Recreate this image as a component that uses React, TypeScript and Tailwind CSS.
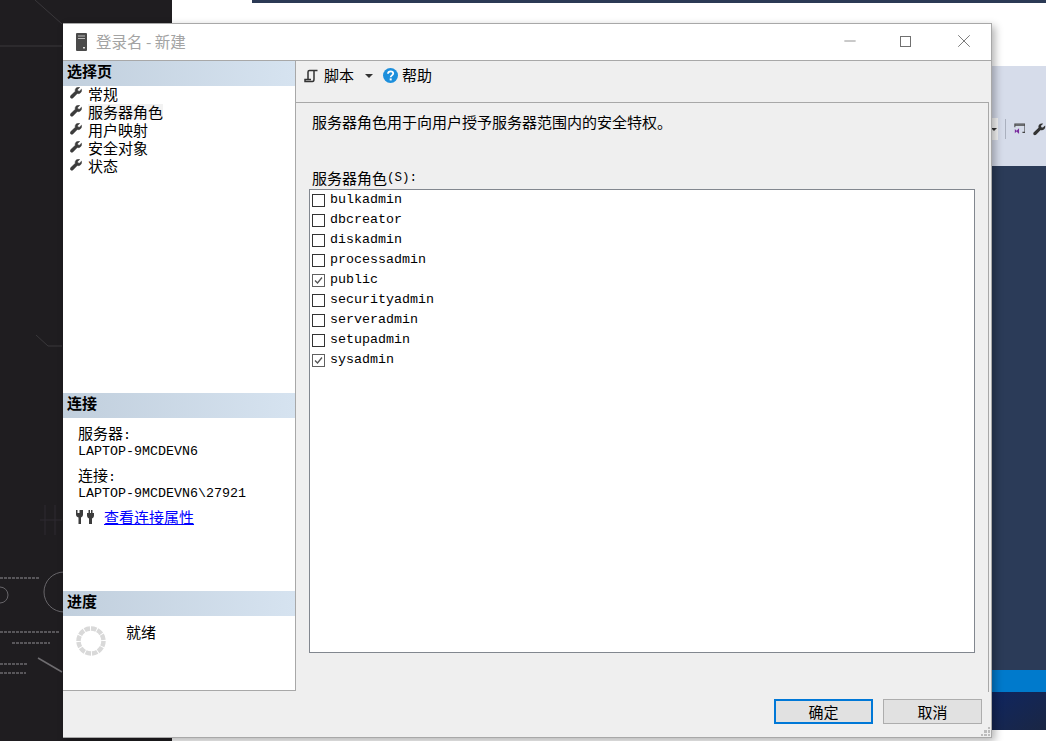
import React from "react";
import { Minus, X } from "lucide-react";

const cjk = "font-['Noto_Sans_CJK_SC','Noto_Sans_CJK_JP',sans-serif]";
const mono = "font-['Liberation_Mono',monospace]";

const pages = ["常规", "服务器角色", "用户映射", "安全对象", "状态"];
const roles = [
  { name: "bulkadmin", on: false },
  { name: "dbcreator", on: false },
  { name: "diskadmin", on: false },
  { name: "processadmin", on: false },
  { name: "public", on: true },
  { name: "securityadmin", on: false },
  { name: "serveradmin", on: false },
  { name: "setupadmin", on: false },
  { name: "sysadmin", on: true },
];

const wrenchPath =
  "M11.500 2.200 9.400 4.200 7.900 3.900 7.600 2.400 9.700.500C8.400-.1 6.900.2 6 1.200 5.200 2 5 3.200 5.300 4.300L.8 8.600C.1 9.300.1 10.300.7 10.900c.6.6 1.500.6 2.200 0L7.300 6.500C8.500 6.900 9.700 6.600 10.600 5.700 11.500 4.800 11.900 3.400 11.500 2.200Z";

function Wrench() {
  return (
    <svg viewBox="0 0 12 12" className="w-3 h-3 shrink-0">
      <path d={wrenchPath} fill="#3c3c3c" stroke="#3c3c3c" strokeWidth="0.500" />
    </svg>
  );
}

function SectionHead({ children }: { children: React.ReactNode }) {
  return (
    <div className={`h-[25px] px-[4px] pb-[6px] flex items-center bg-gradient-to-r from-[#c1cfdd] to-[#d6e3f0] text-[15px] font-bold text-black leading-none ${cjk}`}>
      {children}
    </div>
  );
}

function RoleRow({ name, on }: { name: string; on: boolean }) {
  return (
    <div className="h-5 flex items-center pl-[1px]">
      <div className={`w-[13px] h-[13px] border bg-white mr-[5px] flex items-center justify-center ${on ? "border-[#606060]" : "border-[#333]"}`}>
        {on && (
          <svg viewBox="0 0 11 11" className="w-[11px] h-[11px]">
            <path d="M2 5.500 4.500 8 9 2.500" fill="none" stroke="#555" strokeWidth="1.300" />
          </svg>
        )}
      </div>
      <span className={`text-[13.33px] text-black ${mono}`}>{name}</span>
    </div>
  );
}

function Spinner() {
  return (
    <svg viewBox="0 0 30 30" className="w-[30px] h-[30px]">
      <circle cx="15" cy="15" r="12.500" fill="none" stroke="#d9d9d9" strokeWidth="4.500" strokeDasharray="5.500 1" />
    </svg>
  );
}

function Plug() {
  return (
    <svg viewBox="0 0 20 16" className="w-5 h-4">
      <path d="M1 1h1.500v3h2V1H6l2 0v4.500c0 1.500-1 2.500-2 3V15H3.500V8.500c-1.500-.5-2.500-1.500-2.500-3Z" fill="#3c3c3c" />
      <path d="M12 4h1.500V1h1.500v3h1V1h1.500v3H19v2.500c0 1.500-1 2.500-2 3V15h-3V9.500c-1-.5-2-1.500-2-3Z" fill="#3c3c3c" />
    </svg>
  );
}

function Backdrop() {
  return (
    <div className="absolute inset-0 bg-white overflow-hidden">
      <div className="absolute left-0 top-0 bottom-0 w-[172px] bg-[#1f1d20]">
        <svg viewBox="0 0 172 741" className="w-full h-full blur-[0.5px]">
          <path d="M35 0 62 24M0 46H62M36 335 48 346H62" stroke="#3a383b" strokeWidth="1" fill="none" />
          <path d="M40 520H62M45 505V535M55 505V535" stroke="#2f2b30" fill="none" />
          <circle cx="0" cy="595" r="8" fill="none" stroke="#68666a" />
          <circle cx="64" cy="592" r="20" fill="none" stroke="#68666a" />
          <path d="M38 658 62 672" stroke="#6f6d70" strokeWidth="1.500" />
          <path d="M0 578H40M0 632H60M12 643H50M0 664H28M0 673H26" stroke="#58565a" strokeWidth="2" strokeDasharray="3 1" />
        </svg>
      </div>
      <div className="absolute left-[252px] right-0 top-0 h-[3px] bg-[#2b3a55]" />
      <div className="absolute left-[991px] right-0 top-[66px] h-[100px] bg-[#d6dcea]">
        <div className="mt-[52px] h-[22px] flex items-center">
          <div className="w-[8px] h-[22px] bg-[#f5f5f5] flex items-center justify-center">
            <div className="border-x-[3px] border-t-[3px] border-x-transparent border-t-[#333]" />
          </div>
          <div className="w-px h-[20px] bg-[#aab0be] ml-[7px]" />
          <svg viewBox="0 0 14 14" className="w-[14px] h-[14px] ml-[8px]">
            <path d="M1 5V1h12v10h-3M1 2.500h12" fill="none" stroke="#444" strokeWidth="1.200" />
            <path d="M1 7l2 2 3-3v7l-3-3-2 2Z" fill="#7a2c9e" />
          </svg>
          <svg viewBox="0 0 12 12" className="w-[15px] h-[15px] ml-[8px]">
            <path d={wrenchPath} fill="#333" />
          </svg>
        </div>
      </div>
      <div className="absolute left-[991px] right-0 top-[166px] h-[504px] bg-[#2b3b58]" />
      <div className="absolute left-[991px] right-0 top-[670px] h-[22px] bg-[#007acc]" />
      <div className="absolute left-[991px] right-0 top-[692px] h-[38px] bg-gradient-to-br from-[#0f2560] to-[#1a2644]" />
    </div>
  );
}

export default function App() {
  return (
    <div className={`relative w-[1046px] h-[741px] overflow-hidden ${cjk}`}>
      <Backdrop />

      {/* dialog */}
      <div className="absolute left-[63px] top-[23px] w-[929px] h-[715px] flex flex-col bg-[#efefef] border border-[#a8a8a8] border-l-0 shadow-[3px_3px_8px_rgba(0,0,0,0.3)]">
        <div className="h-[37px] shrink-0 bg-white border-b border-[#a8a8a8] flex items-center">
          <svg viewBox="0 0 11 18" className="w-[11px] h-[18px] ml-[13px]">
            <rect width="11" height="18" rx="1" fill="#4a4a4a" />
            <path d="M2 3h7M2 5.500h7" stroke="#bbb" />
            <rect x="7" y="14" width="2" height="1.500" fill="#ddd" />
          </svg>
          <span className="ml-[9px] text-[15.500px] text-[#a3a3a3]">登录名 - 新建</span>
          <div className="ml-auto pb-[2px] flex items-center text-[#707070]">
            <Minus className="w-[18px] h-[18px] mr-[41px]" strokeWidth={1} />
            <div className="w-[11px] h-[11px] border border-[#707070] mr-[42px]" />
            <X className="w-[22px] h-[22px] mr-[16px]" strokeWidth={1} />
          </div>
        </div>

        <div className="flex-1 flex min-h-0">
          {/* left column */}
          <div className="w-[233px] shrink-0 h-[630px] bg-white border-r border-b border-[#a8a8a8] flex flex-col text-black">
            <SectionHead>选择页</SectionHead>
            <div className="pl-[7px] h-[307px] text-[15px]">
              <div className="-mt-[2px]">
                {pages.map((p) => (
                  <div key={p} className="h-[18px] flex items-center gap-[6px]">
                    <Wrench />
                    <span className={`leading-none ${p === "服务器角色" ? "bg-[#f2f2f2]" : ""}`}>{p}</span>
                  </div>
                ))}
              </div>
            </div>
            <SectionHead>连接</SectionHead>
            <div className="h-[173px] pl-[15px] pt-[6px] text-[15px]">
              <div className="leading-[18px]">服务器<span className={`text-[13.33px] ${mono}`}>:</span></div>
              <div className={`text-[13.33px] leading-[13px] ${mono}`}>LAPTOP-9MCDEVN6</div>
              <div className="leading-[18px] mt-[8px]">连接<span className={`text-[13.33px] ${mono}`}>:</span></div>
              <div className={`text-[13.33px] leading-[13px] ${mono}`}>LAPTOP-9MCDEVN6\27921</div>
              <div className="flex items-center mt-[7px] -ml-[3px]">
                <Plug />
                <span className="ml-[9px] text-[#0000ff] underline leading-[20px]">查看连接属性</span>
              </div>
            </div>
            <SectionHead>进度</SectionHead>
            <div className="flex pl-[13px] pt-[10px]">
              <Spinner />
              <span className="ml-[20px] -mt-[5px] text-[15px]">就绪</span>
            </div>
          </div>

          {/* right column */}
          <div className="flex-1 flex flex-col min-w-0 relative">
            <div className="h-[41px] shrink-0 flex items-center pl-[8px] pb-[12px] text-[15px] text-black">
              <svg viewBox="0 0 14 14" className="w-[14px] h-[14px]">
                <path d="M4 11V3c0-1 .5-1.500 1.500-1.500H13.500M10 2v8c0 1.500-.5 2.500-1.500 2.500H1V10.500h6" fill="none" stroke="#333" strokeWidth="1.500" />
              </svg>
              <span className="ml-[6px]">脚本</span>
              <div className="ml-[11px] border-x-[4px] border-t-[4px] border-x-transparent border-t-[#333]" />
              <svg viewBox="0 0 15 15" className="ml-[10px] w-[15px] h-[15px]">
                <circle cx="7.500" cy="7.500" r="7.500" fill="#1c8fdc" />
                <path d="M5 5.800C5 4.300 6.100 3.300 7.600 3.300 9.100 3.300 10.200 4.200 10.200 5.500 10.200 7.300 7.700 7.400 7.700 9.200" fill="none" stroke="#fff" strokeWidth="1.800" />
                <rect x="6.700" y="10.400" width="2" height="2" fill="#fff" />
              </svg>
              <span className="ml-[4px]">帮助</span>
            </div>

            <div className="h-[590px] shrink-0 mr-[2px] border-t border-r border-[#a8a8a8] pl-[13px] pr-[13px] flex flex-col">
              <div className="mt-[9px] ml-[3px] text-[15px] leading-[20px] text-black">服务器角色用于向用户授予服务器范围内的安全特权。</div>
              <div className="mt-[36px] ml-[3px] h-[20px] flex items-center text-[15px] text-black">
                服务器角色
                <span className={`text-[12.5px] ${mono}`}>(S):</span>
              </div>
              <div className="mt-px h-[464px] bg-white border border-[#82878f] pl-[1px] pt-0">
                {roles.map((r) => (
                  <RoleRow key={r.name} name={r.name} on={r.on} />
                ))}
              </div>
            </div>

            <div className="absolute right-[9px] bottom-[13px] flex gap-[10px]">
              <button className="w-[99px] h-[25px] bg-[#e1e1e1] border-2 border-[#0078d7] text-[15px] leading-none text-black">确定</button>
              <button className="w-[99px] h-[25px] bg-[#e1e1e1] border border-[#adadad] text-[15px] leading-none text-black">取消</button>
            </div>
            <div className="absolute right-[1px] bottom-[1px] w-[9px] h-[9px] grid grid-cols-3 gap-px">
              <span /><span /><span className="bg-[#bcbcbc]" />
              <span /><span className="bg-[#bcbcbc]" /><span className="bg-[#bcbcbc]" />
              <span className="bg-[#bcbcbc]" /><span className="bg-[#bcbcbc]" /><span className="bg-[#bcbcbc]" />
            </div>
          </div>
        </div>
      </div>
    </div>
  );
}
